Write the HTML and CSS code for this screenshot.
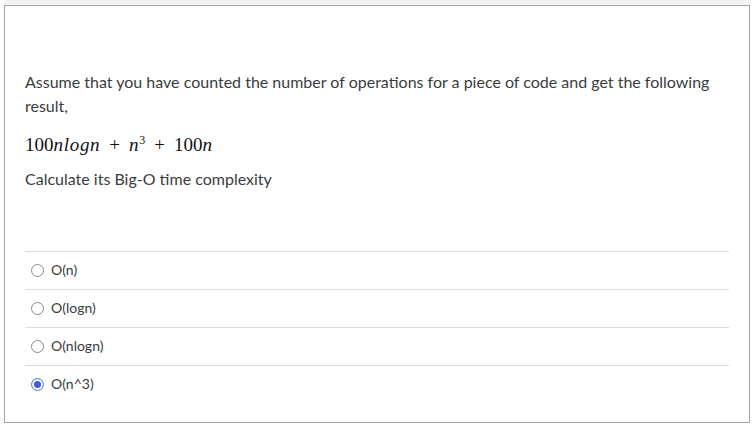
FILE: index.html
```html
<!DOCTYPE html>
<html>
<head>
<meta charset="utf-8">
<link rel="stylesheet" href="styles.css">
</head>
<body>
<div class="page">
  <div class="strip"></div>
  <div class="card">
    <div class="question">
      <p class="text">Assume that you have counted the number of operations for a piece of code and get the following result,</p>
      <p class="math"><span class="num">100</span><i>nlogn</i><span class="op">+</span><i>n</i><sup>3</sup><span class="op">+</span><span class="num">100</span><i>n</i></p>
      <p class="text calc">Calculate its Big-O time complexity</p>
    </div>
    <ul class="answers">
      <li class="answer"><span class="radio"></span><span class="label">O(n)</span></li>
      <li class="answer"><span class="radio"></span><span class="label">O(logn)</span></li>
      <li class="answer"><span class="radio"></span><span class="label">O(nlogn)</span></li>
      <li class="answer"><span class="radio checked"></span><span class="label">O(n^3)</span></li>
    </ul>
  </div>
</div>
</body>
</html>
```
FILE: styles.css
```css
html, body {
  margin: 0;
  padding: 0;
  background: #fff;
}
.page {
  margin-left: 4px;
  width: 746px;
}
.strip {
  height: 5px;
  background: #f3f3f3;
}
.card {
  border: 1px solid #a3a3a3;
  height: 418px;
  box-sizing: border-box;
  padding: 64px 20px 0 20px;
  font-family: Lato, "Liberation Sans", sans-serif;
  color: #3a3d40;
}
.question p {
  margin: 0;
}
.text {
  font-size: 16px;
  line-height: 24px;
}
.math {
  font-family: "Liberation Serif", "DejaVu Serif", serif;
  font-size: 19px;
  line-height: 30px;
  margin-top: 12px !important;
  color: #111;
}
.math i {
  font-style: italic;
  letter-spacing: 0.7px;
}
.math sup {
  font-size: 12px;
  vertical-align: 7px;
  line-height: 0;
}
.math .op {
  margin: 0 9px;
}
.calc {
  margin-top: 7px !important;
}
.answers {
  list-style: none;
  margin: 60px 0 0 0;
  padding: 0;
}
.answer {
  border-top: 1px solid #dcdcdc;
  height: 37px;
  box-sizing: content-box;
  display: flex;
  align-items: center;
  padding-left: 6px;
  font-size: 14px;
}
.radio {
  width: 13px;
  height: 13px;
  box-sizing: border-box;
  border: 1px solid #8a8a8a;
  border-radius: 50%;
  margin-right: 7px;
  margin-top: 0;
  background: #fff;
}
.radio.checked {
  border-color: #6f8ee0;
  background: #3f5fd4;
  box-shadow: inset 0 0 0 2px #fff;
}
.label {
  line-height: 20px;
  margin-top: -2px;
}
```
